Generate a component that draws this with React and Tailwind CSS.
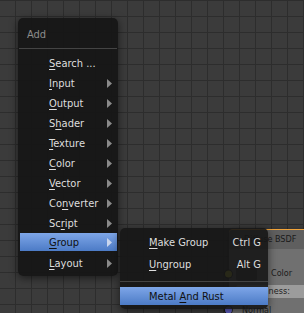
const items = [
  { label: 'Search ...', u: 0, arrow: false },
  { label: 'Input', u: 0, arrow: true },
  { label: 'Output', u: 0, arrow: true },
  { label: 'Shader', u: 1, arrow: true },
  { label: 'Texture', u: 0, arrow: true },
  { label: 'Color', u: 0, arrow: true },
  { label: 'Vector', u: 0, arrow: true },
  { label: 'Converter', u: 2, arrow: true },
  { label: 'Script', u: 2, arrow: true },
  { label: 'Group', u: 0, arrow: true, active: true },
  { label: 'Layout', u: 0, arrow: true },
];

function Mnemonic({ text, u }) {
  return (
    <span className="flex-1 whitespace-pre">
      {text.slice(0, u)}
      <span className="underline decoration-1 underline-offset-[2px]">{text[u]}</span>
      {text.slice(u + 1)}
    </span>
  );
}

function Arrow({ active }) {
  return (
    <svg width="5" height="9" viewBox="0 0 5 9" className="shrink-0">
      <polygon points="0,0 5,4.5 0,9" fill={active ? '#c9d6ee' : '#8a8a8a'} />
    </svg>
  );
}

function MenuRow({ item }) {
  if (item.active) {
    return (
      <div className="ml-[2px] mr-[1px] mb-[2px] flex h-[18px] items-center bg-gradient-to-b from-[#7ea6e8] to-[#4c7bc6] pl-[29px] pr-[5px] pt-[1px] text-[#101010]">
        <Mnemonic text={item.label} u={item.u} />
        <Arrow active />
      </div>
    );
  }
  return (
    <div className="flex h-[20px] items-center pl-[31px] pr-[6px] text-[#dedede]">
      <Mnemonic text={item.label} u={item.u} />
      {item.arrow && <Arrow />}
    </div>
  );
}

function Socket({ color }) {
  return <span className={`absolute -left-[4px] top-1/2 h-[7px] w-[7px] -translate-y-1/2 rounded-full ring-1 ring-black/60 ${color}`} />;
}

function DiffuseNode() {
  return (
    <div className="absolute left-[229px] top-[229px] flex w-[150px] flex-col rounded-[4px] border-t border-[#f2a43a] bg-[#707070] pb-[10px] text-[9px] text-[#1c1c1c] shadow-[0_2px_6px_rgba(0,0,0,0.5)]">
      <div className="flex h-[19px] items-center rounded-t-[4px] bg-[#5f5f5f] pl-[15px] text-[#1a1a1a]">Diffuse BSDF</div>
      <div className="relative mt-[17px] flex h-[15px] items-center gap-[14px] pl-[7px]">
        <Socket color="bg-[#c7c729]" />
        <span className="h-[15px] w-[21px] rounded-[3px] bg-[#3c3c3c]" />
        <span>Color</span>
      </div>
      <div className="ml-[7px] mr-[4px] mt-[4px] flex h-[13px] items-center justify-between rounded-[3px] bg-[#9c9c9c] px-[7px]">
        <span>Roughness:</span>
        <span>0.000</span>
      </div>
      <div className="relative mt-[6px] flex h-[12px] items-center pl-[13px]">
        <Socket color="bg-[#6363c7]" />
        <span>Normal</span>
      </div>
    </div>
  );
}

export default function App() {
  return (
    <div className="relative h-[313px] w-[304px] overflow-hidden bg-[#3b3b3b] bg-[linear-gradient(to_right,#2d2d2d_1px,transparent_1px),linear-gradient(to_bottom,#2d2d2d_1px,transparent_1px)] bg-size-[16px_16px] bg-position-[15px_0px] font-['DejaVu_Sans_Condensed','DejaVu_Sans',sans-serif] text-[11px] leading-none">
      <DiffuseNode />

      <div className="absolute left-[18px] top-[18px] w-[100px] rounded-[5px] bg-[rgba(22,22,22,0.95)] pb-[3px] shadow-[0_2px_8px_rgba(0,0,0,0.55)]">
        <div className="flex h-[30px] items-center pl-[9px] pt-[2px] text-[#8c8c8c]">Add</div>
        <div className="mx-[1px] h-px bg-[#444444]" />
        <div className="pt-[4px]">
          {items.map((item) => (
            <MenuRow key={item.label} item={item} />
          ))}
        </div>
      </div>

      <div className="absolute left-[120px] top-[228px] w-[148px] rounded-[5px] bg-[rgba(22,22,22,0.9)] pb-[4px] pt-[3px] shadow-[0_2px_8px_rgba(0,0,0,0.55)]">
        <div className="flex h-[22px] items-center pl-[29px] pr-[7px] text-[#dedede]">
          <Mnemonic text="Make Group" u={0} />
          <span>Ctrl G</span>
        </div>
        <div className="flex h-[22px] items-center pl-[29px] pr-[7px] text-[#dedede]">
          <Mnemonic text="Ungroup" u={0} />
          <span>Alt G</span>
        </div>
        <div className="mt-[6px] h-px bg-[#444444]" />
        <div className="mt-[5px] flex h-[18px] items-center bg-gradient-to-b from-[#7ea6e8] to-[#4c7bc6] pl-[29px] pt-[1px] text-[#101010]">
          <Mnemonic text="Metal And Rust" u={6} />
        </div>
      </div>
    </div>
  );
}
